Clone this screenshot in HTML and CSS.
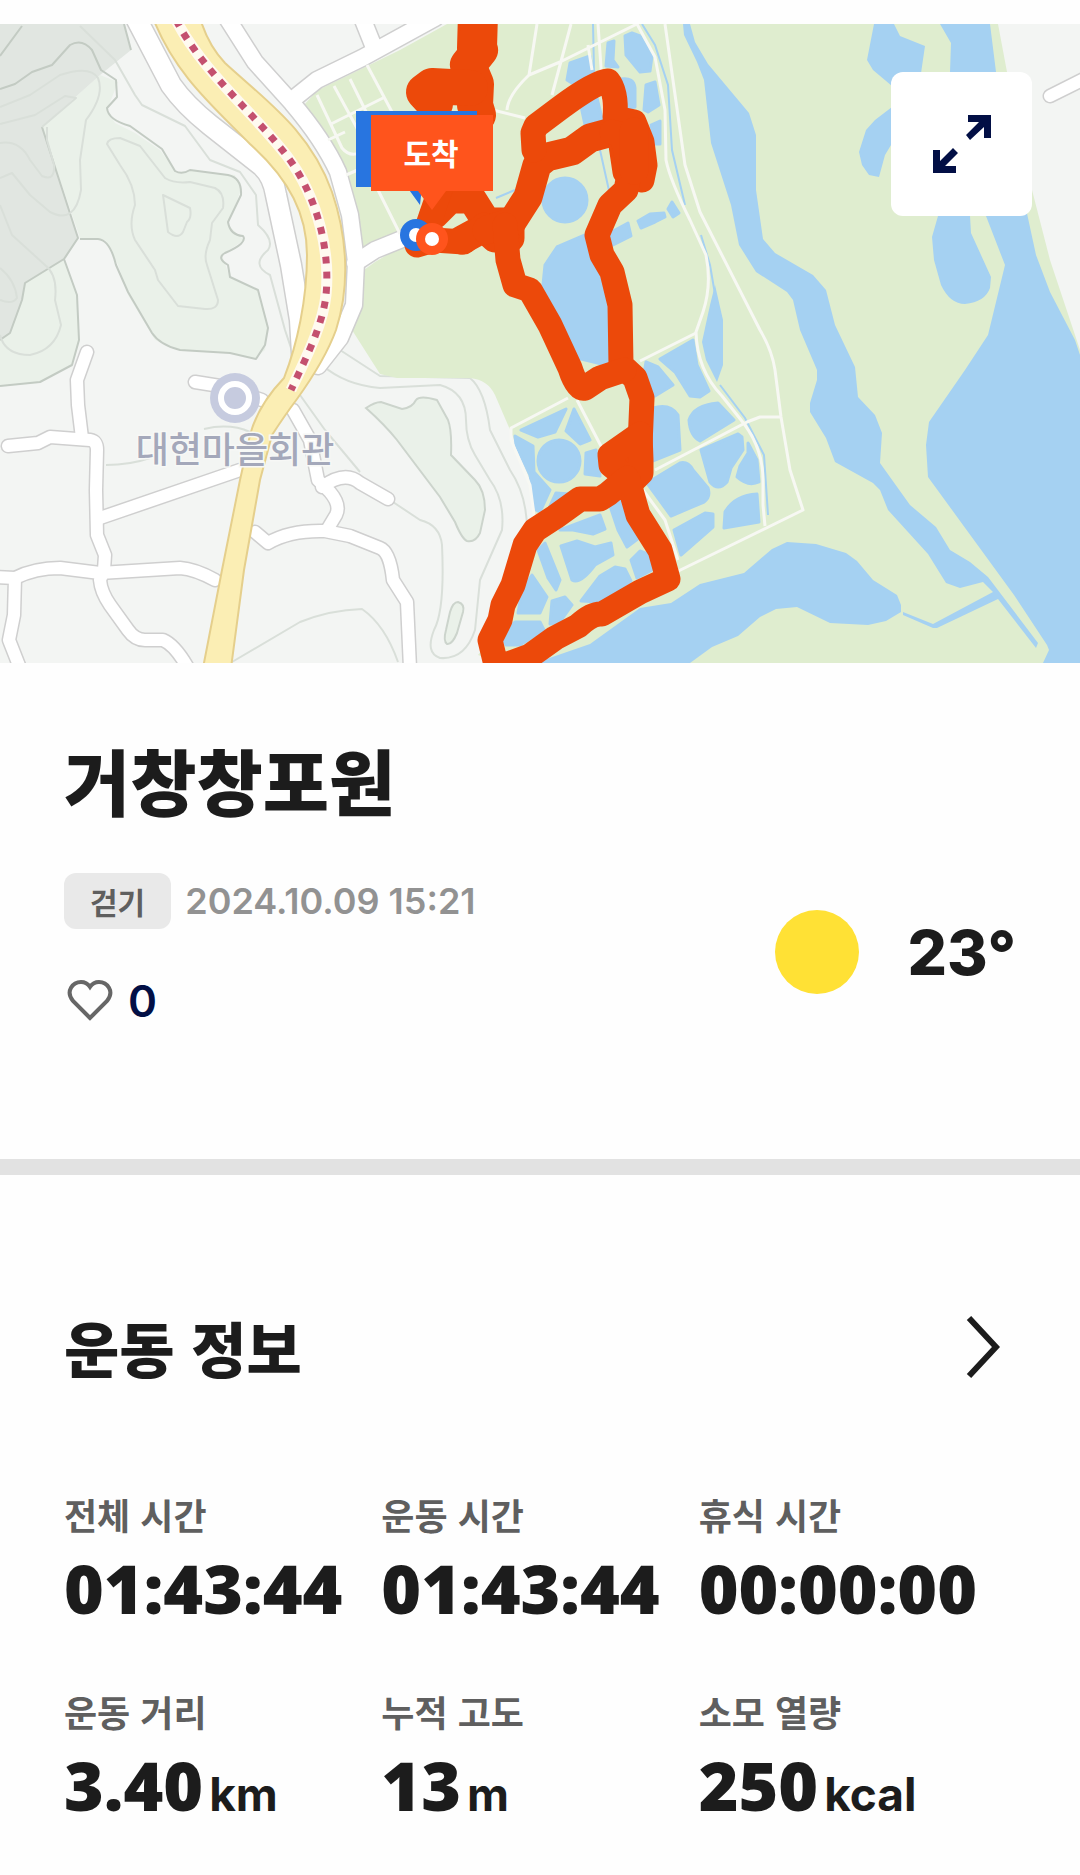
FILE: index.html
```html
<!DOCTYPE html>
<html lang="ko">
<head>
  <meta charset="UTF-8" />
  <meta name="viewport" content="width=device-width, initial-scale=1.0" />
  <title>거창창포원</title>
  <link rel="stylesheet" href="styles.css">
</head>
<body>
  <div class="map">
    <svg class="map-canvas" viewBox="0 24 1080 639" role="img" aria-label="이동 경로 지도">
      <defs>
        <g id="roads">
          <path class="w20" d="M136 18L171 85Q185 105 210 125L262 166Q273 176 276 195L291 265L300 320L303 370" />
          <path class="w16" d="M227 18L255 62L292 103C315 130 328 150 338 172L350 215L356 262L354 305L340 338L318 366" />
          <path class="w16" d="M292 100L317 80L362 58L435 18M363 20L373 45M355 263L375 250L412 235" />
          <path class="w12" d="M87 352L77 380L78 405L82 438" />
          <path class="w12" d="M8 446L38 443L50 437L90 440Q97 441 97 450L96 490L97 535L105 555L104 570L100 580Q101 592 110 605L128 630Q135 640 145 640L163 640Q175 645 188 668" />
          <path class="w12" d="M100 518L240 470M195 382L220 386L262 400" />
          <path class="w12" d="M-5 577L15 578Q35 568 60 568L100 573L180 568Q195 569 215 580M15 578L14 615L9 640L20 668" />
          <path class="w12" d="M293 410L310 440L318 480L330 492Q341 505 336 515L327 530M322 487Q345 470 360 483L388 499" />
          <path class="w12" d="M255 532L268 543Q290 530 325 531L350 536L380 548Q390 552 393 580L407 602L410 668" />
          <path class="w12" d="M1050 96L1090 76" />
        </g>
      </defs>

      <rect class="land" x="0" y="24" width="1080" height="639" />

      <!-- hills -->
      <path class="hill" d="M100 75L118 82L107 110L115 123L135 133L160 150L177 173L190 170L235 175L241 190L228 225L244 240L222 255L230 278L258 290L268 325L265 350L255 359L230 353L180 350L155 340L128 295L118 265L105 240L80 238L42 127Z" />
      <path class="hill" d="M64 259L77 295L79 340L72 365L40 382L0 386L0 340L24 283Z" />
      <path class="hill outlined" d="M366 408Q375 402 381 402L402 409Q412 408 416 400Q420 395 437 400L448 420Q452 430 451 455L475 480Q485 490 485 510L480 533Q475 543 467 541Q462 539 455 522L440 497L397 440Q385 425 366 408Z" />
      <path class="hill outlined" d="M458 602Q465 604 463 612L457 633Q452 645 447 644Q443 641 446 630L450 612Q453 602 458 602Z" />
      <path class="mountain" d="M0 24L124 24L131 50L100 75L42 127L78 238L66 258L24 283L22 300L10 333L0 340Z" />

      <path class="ridge" d="M0 89L15 84L32 72L52 65L70 45Q82 38 92 50L101 70L116 80L117 97L107 108Q108 120 130 126L162 149L175 171Q182 175 190 170L228 175Q242 178 241 195L228 222Q230 235 243 236Q248 243 225 253Q216 258 228 265L230 277L258 290L268 328L265 345L256 359L230 353L180 350Q160 345 152 333L128 292L116 265Q110 240 98 239L80 239" />
      <path class="ridge" d="M124 24L131 50M42 127L78 238L64 259L77 295L79 340L72 365L40 382L0 386M64 259L25 283L22 300L10 333L0 340M0 56L22 26" />
      <path class="contour" d="M80 26L115 60L135 95L142 105L185 126L210 160L240 172L256 195L258 225Q275 240 268 250Q250 265 270 275L285 330L295 360" />
      <path class="contour" d="M0 107L30 95L60 75Q90 65 98 78Q105 95 86 120L80 160L81 190Q75 225 50 212L30 195L12 173L0 178M0 124L35 115L65 96L76 98L42 127M0 143Q20 140 30 160L42 176Q55 182 54 165L47 140V127M0 205L12 235L45 265Q58 275 55 300L61 325Q55 350 30 355Q5 355 0 335M0 268Q15 280 17 298Q12 305 0 300" />
      <path class="contour" d="M107 144Q108 138 120 138L140 146L165 178Q175 184 190 182L215 188Q225 193 223 208L212 223L210 240Q203 255 207 265L218 300Q218 310 205 309L178 306L158 280L155 270L135 240Q128 225 135 205Q135 185 120 165ZM163 195L190 208Q192 218 187 222L183 232Q178 240 168 232Z" />
      <path class="contour" d="M322 365Q345 385 380 388L440 385Q466 392 466 420Q466 440 475 455L490 480Q505 500 502 530L480 580L475 630Q465 660 440 658Q425 653 434 630Q445 610 442 545Q440 525 420 520L393 502M340 350L380 376L470 378Q485 390 490 430L510 470Q527 495 527 530" />
      <path class="contour" d="M106 465Q130 465 150 458M204 429Q230 423 250 432M300 395L325 430L360 472M232 662L300 622Q330 610 362 609Q385 625 398 662" />

      <!-- park -->
      <path class="park" d="M302 107L318 90L400 50L447 24L998 24L1007 72L1032 190L1050 260L1080 350V663H500L478 655L490 640L535 520L530 480L511 432L495 395Q488 380 470 378L397 378L380 374L352 330L357 290L357 275L375 262L412 240L400 237L358 250L338 172Z" />

      <use href="#roads" class="road-casing" />
      <use href="#roads" class="road-fill" />

      <!-- water -->
      <path class="water" d="M940 24H990L996 72L1028 218L1036 255L1050 292L1075 340L1080 355V663H1043L1049 650L1047 645L1014 595L928 477L926 445L929 422L965 370L988 335L1005 265L986 216L950 72L951 43Z" />
      <path class="water" d="M874 24H894L900 36L925 46L920 80L905 90L892 86L873 70L867 60Z" />
      <path class="water" d="M892 107L875 120L866 130L859 152L862 165L869 175L879 177L885 155L900 130Z" />
      <path class="water" d="M938 216L932 237L934 260L941 285Q950 304 965 304Q985 302 990 288L991 277L971 233L970 216Z" />
      <path class="water" d="M683 24H690L695 42L708 64L749 113L756 135V190L763 239L775 253L813 275L826 290L835 325L855 367L858 397L875 415L882 433L880 463L910 505L936 527L950 550L970 562L988 577L1038 643L1036 648L998 599L937 628L933 628L903 615V612L933 624L993 592L983 582L960 588L946 583L928 554L888 510L880 490L873 483L835 462L826 438L810 412V403L817 380V370L800 330L793 300L787 292L756 272L739 245L731 205L711 143L704 80L697 62L684 35Z" />
      <path class="water" d="M700 584L744 573L772 549L787 542L816 544L846 553L857 561L873 580L897 595L901 605V612L886 621L868 625L830 623L797 607L776 609L760 617L738 636L712 647L690 663H535L590 644L640 608L671 603Z" />
      <path class="water" d="M710 305L715 285L723 320V365L717 382L706 360L702 342Z" />
      <path class="brook" d="M642 24L655 45L668 85L672 150L685 205M701 235L710 265L716 300M720 385L745 418L764 455L768 515M593 24L594 70L600 150L610 195M496 198L515 190" />

      <!-- ponds -->
      <g class="water pond">
        <circle cx="565" cy="200" r="22" />
        <path d="M585 235L557 247L545 265L543 285L548 303L563 330L573 357L610 366V240ZM632 33L640 36L652 56L650 71L640 72L626 55L625 36ZM608 43L614 41L613 60L618 67L606 66ZM570 63L590 56L594 80L575 85L567 80ZM621 79Q634 77 635 88V107L625 109ZM646 85L655 82L659 105L648 112L644 110ZM651 125L660 121V144L655 144ZM581 106L597 98L603 122L585 125ZM628 223L631 236L611 246L606 235ZM638 221L650 214L664 213L665 217L655 222L641 228ZM672 202L679 213L673 217L668 209Z" />
        <path d="M646 362L658 367L673 385L655 396L640 397ZM660 359L693 340L697 365L709 391L700 397L690 396L675 372ZM653 408Q670 403 678 415L680 450L650 462ZM689 420Q694 405 718 403L734 420L700 441Q690 436 689 420ZM647 483L680 463Q688 461 693 470L708 488Q711 497 704 502L671 516ZM701 450L738 434L742 437L743 450L731 468L727 482Q718 492 710 482ZM748 443L757 460L759 482Q748 487 737 477L740 466L748 453ZM724 528L725 512Q735 495 757 494L759 522ZM674 530L705 513L713 514V527L681 555Z" />
        <path d="M521 430L566 409L555 432L538 437ZM574 409L590 440L580 444L566 431ZM515 436L533 446L534 472L550 490L540 512L536 510L530 475L516 445ZM586 453L596 450L600 476L585 474ZM556 493L570 494L550 506ZM560 530L600 515L605 529L593 534L573 530ZM608 500H620L630 525L639 538L627 547L618 530ZM561 546L577 541L595 547L611 543L613 555L595 565Q580 585 572 580ZM538 550L545 543L560 580L556 590L548 578ZM532 575L547 597L540 613H518L522 590ZM501 635L515 622H540L544 630L520 645H506ZM552 601L565 597L572 605L560 622L550 624ZM581 601L600 576L615 567L625 569L631 581L600 602ZM631 560L640 551L650 555L652 570L637 578Z" />
        <circle cx="559" cy="461" r="21" />
      </g>

      <!-- park paths -->
      <path class="trail" d="M537 24L529 75Q508 95 507 110M571 24L552 95M529 75L560 62L637 24M598 24L605 125M588 45L592 70M493 110L525 118M637 24L655 57L665 110L666 160Q670 180 690 220L706 255Q712 285 703 312L696 332Q697 370 722 396L745 425Q763 450 763 480V505L765 526M665 24L685 165L700 212L760 330Q772 350 775 370L781 417L790 470L803 510L660 580" />
      <path class="trail" d="M640 361L696 333M655 470L747 422L760 417H781M568 398L511 428V440L530 485L535 522M577 400L603 450M643 490L665 520L678 560" />
      <path class="trail" d="M317 95L342 148Q350 158 362 152M334 86L358 130M350 79L375 130M367 65L392 112M331 124L383 98M328 140L345 132M346 175L360 169M378 190L400 234" />

      <!-- main road -->
      <path class="highway" d="M153 18C175 75 215 108 250 144C290 180 307 215 307 255C307 300 297 345 284 378Q258 405 250 435L240 480L222 570L203 668H231L244 570L260 480L272 435Q285 415 297 399Q325 360 336 330C352 280 345 230 332 192C310 130 265 100 225 63Q208 45 200 18Z" />
      <path class="rail-bed" d="M176 20C203 72 253 112 287 156C320 200 330 255 326 295C323 325 305 360 291 390" />
      <path class="rail" d="M176 20C203 72 253 112 287 156C320 200 330 255 326 295C323 325 305 360 291 390" />

      <!-- place -->
      <circle class="poi" cx="235" cy="398" r="25" />
      <circle class="poi-ring" cx="235" cy="398" r="14" />
      <text class="poi-name" x="235" y="463">대현마을회관</text>

      <!-- recorded route -->
      <g class="route">
        <path class="w40" d="M478 14L477 48" />
        <path class="w36" d="M476 40L480 50L468 65L476 84L475 105L478 115" />
        <path class="w36" d="M470 88L432 86L424 92L435 104" />
        <path class="w28" d="M434 215L450 199H472L484 218M485 222L510 222L510 238L495 238L484 228L462 240" />
        <path d="M417 245L434 240L464 242L484 225L508 232M440 190L428 225" />
        <path class="w28" d="M487 230L512 222L528 197L537 165L547 157L572 151L590 138L612 132" />
        <path d="M534 150L533 133L536 126L560 108Q595 82 608 81Q617 92 615 118L634 122L642 142L645 165L642 180L625 172L618 125" />
        <path d="M612 132L622 135L630 170L626 190L610 205L597 235L602 255L612 272L620 305L621 365L635 378L642 398L640 445" />
        <path class="w28" d="M634 132L634 170" />
        <path d="M505 225L508 260L515 285L530 290L550 325L570 368Q577 390 585 388L600 378L624 370" />
        <path class="route-area" d="M640 434L610 455L611 465L632 482L641 473V460Z" />
        <path d="M627 478L608 494L600 499L580 499L555 517L535 530L525 545L513 585L503 605L500 620L490 640L496 665H505L530 656L555 638L578 626Q592 613 602 614L640 592L668 579L660 550L638 515L628 480" />
      </g>

      <!-- start / finish flags -->
      <path class="start" d="M356 111H477V187H422L420 205L407 187H356Z" />
      <circle class="start" cx="416" cy="235" r="16" />
      <circle class="dot" cx="416" cy="235" r="7" />
      <path class="finish" d="M371 115H493V191H446L432 210L418 191H371Z" />
      <circle class="finish" cx="432" cy="239" r="16" />
      <circle class="dot" cx="432" cy="239" r="7" />
      <text class="flag-text" x="431" y="165">도착</text>
    </svg>

    <button class="expand" type="button" aria-label="지도 확대">
      <svg viewBox="0 0 60 60" aria-hidden="true">
        <path d="M36 1H59V24H52V13L38 26L34 21L47 8H36ZM1 36H8V47L21 34L26 39L13 52H24V59H1Z" />
      </svg>
    </button>
  </div>

  <section class="summary">
    <h1>거창창포원</h1>
    <div class="summary-body">
      <div class="meta">
        <div class="meta-row">
          <span class="badge">걷기</span>
          <time datetime="2024-10-09T15:21">2024.10.09 15:21</time>
        </div>
        <button class="like" type="button" aria-label="좋아요 0">
          <svg viewBox="0 0 48 44" aria-hidden="true">
            <path d="M24 39L7 22C-1 12 7 3 15 3C19 3 22 5 24 8C26 5 29 3 33 3C41 3 49 12 41 22Z" />
          </svg>
          <span>0</span>
        </button>
      </div>
      <div class="weather">
        <span class="sun"></span>
        <span class="temp">23°</span>
      </div>
    </div>
  </section>

  <section class="workout">
    <a class="workout-head" href="#workout">
      <h2 id="workout">운동 정보</h2>
      <svg viewBox="0 0 34 64" aria-hidden="true">
        <path d="M3 3L30 32L3 61" />
      </svg>
    </a>
    <dl class="stats">
      <div>
        <dt>전체 시간</dt>
        <dd>01:43:44</dd>
      </div>
      <div>
        <dt>운동 시간</dt>
        <dd>01:43:44</dd>
      </div>
      <div>
        <dt>휴식 시간</dt>
        <dd>00:00:00</dd>
      </div>
      <div>
        <dt>운동 거리</dt>
        <dd>3.40<small>km</small></dd>
      </div>
      <div>
        <dt>누적 고도</dt>
        <dd>13<small>m</small></dd>
      </div>
      <div>
        <dt>소모 열량</dt>
        <dd>250<small>kcal</small></dd>
      </div>
    </dl>
  </section>
</body>
</html>
```
FILE: styles.css
```css
* {
  box-sizing: border-box;
}

body {
  margin: 0;
  padding: 24px 0 0;
  font-family: 'Noto Sans CJK KR', sans-serif;
  background: #fefefe;
  color: #1c1c1c;
}

button {
  border: none;
  padding: 0;
  cursor: pointer;
}

h1, h2, dl, dd {
  margin: 0;
}

/* Map */
.map {
  position: relative;
}

.map-canvas {
  display: block;
  width: 100%;
  height: auto;
}

.land { fill: #f3f5f3; }
.mountain { fill: #e1e6e1; }
.hill { fill: #eaf1e9; }
.hill.outlined { stroke: #ccd4cc; stroke-width: 2; }
.ridge { fill: none; stroke: #c3cbc3; stroke-width: 2; stroke-linejoin: round; }
.contour { fill: none; stroke: #d9dfd9; stroke-width: 2; stroke-linejoin: round; }
.park { fill: #dfedcf; }
.water { fill: #a5d1f2; }
.pond { stroke: #a5d1f2; stroke-width: 3; stroke-linejoin: round; }
.brook { fill: none; stroke: #a5d1f2; stroke-width: 2; }
.trail { fill: none; stroke: #f7f8f3; stroke-width: 3; stroke-linejoin: round; }

#roads path {
  fill: none;
  stroke-linecap: round;
  stroke-linejoin: round;
}

.road-casing { stroke: #cfcfcf; --edge: 3px; }
.road-fill { stroke: #fff; --edge: 0px; }
.w12 { stroke-width: calc(12px + var(--edge)); }
.w16 { stroke-width: calc(16px + var(--edge)); }
.w20 { stroke-width: calc(20px + var(--edge)); }

.highway { fill: #fbeeb4; stroke: #e5cf8c; stroke-width: 2; }
.rail, .rail-bed { fill: none; }
.rail-bed { stroke: #fffaf0; stroke-width: 11; }
.rail { stroke: #c4506f; stroke-width: 7; stroke-dasharray: 7 8; }

.poi { fill: #c6cbdf; }
.poi-ring { fill: #c6cbdf; stroke: #fff; stroke-width: 6; }
.poi-name {
  font-size: 36px;
  font-weight: 500;
  text-anchor: middle;
  fill: #a4a8ba;
  stroke: #f7f8f6;
  stroke-width: 3;
  paint-order: stroke;
}

.route path {
  fill: none;
  stroke: #ec490a;
  stroke-width: 25;
  stroke-linecap: round;
  stroke-linejoin: round;
}

.route .w28 { stroke-width: 29; }
.route .w36 { stroke-width: 36; }
.route .w40 { stroke-width: 40; }
.route .route-area { fill: #ec490a; }

.start { fill: #2875e0; }
.finish { fill: #ff541c; }
.dot { fill: #fff; }
.flag-text {
  font-size: 30px;
  font-weight: 700;
  text-anchor: middle;
  fill: #fff;
}

.expand {
  position: absolute;
  top: 48px;
  right: 48px;
  display: flex;
  align-items: center;
  justify-content: center;
  width: 141px;
  height: 144px;
  border-radius: 12px;
  background: #fff;
}

.expand svg {
  width: 60px;
  height: 60px;
  fill: #020f45;
}

/* Title, date, weather */
.summary {
  padding: 68px 64px 128px;
  border-bottom: 16px solid #e2e2e2;
}

h1 {
  font-size: 72px;
  line-height: 96px;
  font-weight: 900;
}

.summary-body {
  display: flex;
  justify-content: space-between;
  align-items: center;
  margin-top: 46px;
}

.meta-row {
  display: flex;
  align-items: center;
  gap: 14px;
}

.badge {
  padding: 0 26px;
  border-radius: 12px;
  background: #e9e9e9;
  color: #5f5f5f;
  font-size: 30px;
  line-height: 56px;
  font-weight: 700;
}

time {
  font-family: Inter, sans-serif;
  font-size: 36px;
  font-weight: 600;
  color: #929292;
}

.like {
  display: flex;
  align-items: center;
  gap: 14px;
  margin-top: 42px;
  padding-left: 2px;
  background: none;
  color: #020f45;
  font-family: Inter, sans-serif;
  font-size: 44px;
  line-height: 60px;
  font-weight: 600;
}

.like svg {
  width: 48px;
  height: 44px;
  fill: none;
  stroke: #666;
  stroke-width: 4;
}

.weather {
  display: flex;
  align-items: center;
  gap: 48px;
}

.sun {
  width: 84px;
  height: 84px;
  border-radius: 50%;
  background: #ffe135;
}

.temp {
  font-family: Inter, sans-serif;
  font-size: 62px;
  font-weight: 800;
}

/* Workout */
.workout {
  padding: 128px 64px 48px;
}

.workout-head {
  display: flex;
  justify-content: space-between;
  align-items: center;
  padding-right: 16px;
  color: inherit;
  text-decoration: none;
}

h2 {
  font-size: 60px;
  line-height: 88px;
  font-weight: 900;
}

.workout-head svg {
  width: 34px;
  height: 64px;
  fill: none;
  stroke: #1c1c1c;
  stroke-width: 6;
}

.stats {
  display: grid;
  grid-template-columns: repeat(3, 1fr);
  row-gap: 49px;
  margin-top: 97px;
}

dt {
  color: #5f5f5f;
  font-size: 36px;
  line-height: 52px;
  font-weight: 700;
}

dd {
  font-family: 'Open Sans', sans-serif;
  font-size: 68px;
  line-height: 96px;
  font-weight: 800;
  white-space: nowrap;
}

small {
  margin-left: 6px;
  font-family: Inter, sans-serif;
  font-size: 46px;
  line-height: 46px;
  font-weight: 700;
}
```
